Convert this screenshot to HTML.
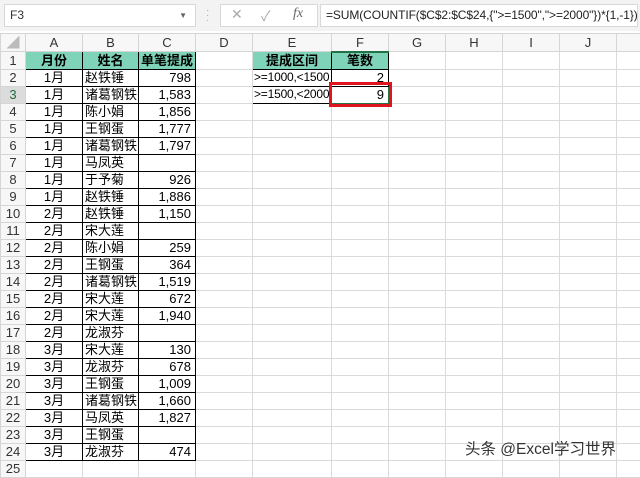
<!DOCTYPE html>
<html><head><meta charset="utf-8"><style>
body{margin:0;width:640px;height:469px;overflow:hidden;background:#fff;font-family:"Liberation Sans","Noto Sans CJK SC",sans-serif;position:relative}
.fb{position:absolute;top:0;left:0;width:640px;height:31px;background:#f3f3f3}
.nb{position:absolute;left:4px;top:4px;width:190px;height:21px;background:#fff;border:1px solid #d8d8d8;font-size:12px;line-height:21px;text-indent:5px;color:#333}
.ic{position:absolute;left:220px;top:4px;width:96px;height:21px;background:#fff;border:1px solid #d8d8d8;color:#aaa;font-size:14px}
.fx{position:absolute;left:320px;top:4px;width:316px;height:21px;background:#fff;border:1px solid #d8d8d8;font-size:12px;line-height:21px;text-indent:5px;color:#222;white-space:nowrap;overflow:hidden;letter-spacing:-0.1px}
table{position:absolute;top:33px;left:0;width:640px;border-collapse:collapse;table-layout:fixed}
td{border:1px solid #dadada;height:16px;padding:0;font-size:13px;line-height:15px;white-space:nowrap;overflow:hidden;color:#000;text-indent:2px}
tr{height:17px}
tr.h{height:18px}
tr.h td{background:#f7f7f7;text-align:center;color:#333;font-size:13px;border-color:#d5d5d5;text-indent:0}
td.r{background:#f7f7f7;text-align:center;color:#333;font-size:13px;text-indent:0;border-color:#d5d5d5}
td.s{background:#dcdcdc;color:#1e6b3e}
.g{background:#7ed3b8;font-weight:bold;text-align:center;border:1px solid #000!important;text-indent:0}
.b{border:1px solid #000!important}
.e{font-size:12px;text-indent:1px;letter-spacing:-0.2px}
.c{text-align:center;text-indent:0}.n{text-align:right;padding-right:4px}
.wm{position:absolute;left:465px;top:437px;font-size:15.5px;color:#333;white-space:nowrap}
.red{position:absolute;left:329px;top:82px;width:63px;height:25px;border:3px solid #e0141e;box-sizing:border-box}
</style></head><body>
<div class="fb"><div class="nb">F3<span style="position:absolute;right:8px;top:0;font-size:8px;color:#666">▼</span></div>
<div style="position:absolute;left:206px;top:8px;color:#aaa;font-size:10px;line-height:5px">·<br>·<br>·</div>
<div class="ic"><span style="position:absolute;left:10px;top:1px">✕</span><span style="position:absolute;left:40px;top:1px">✓</span><span style="position:absolute;left:72px;top:1px;font-family:'Liberation Serif';font-style:italic;color:#666">fx</span></div>
<div class="fx">=SUM(COUNTIF($C$2:$C$24,{"&gt;=1500","&gt;=2000"})*{1,-1})</div></div>
<table>
<colgroup><col style="width:25px"><col style="width:57px"><col style="width:56px"><col style="width:57px"><col style="width:57px"><col style="width:79px"><col style="width:57px"><col style="width:57px"><col style="width:57px"><col style="width:57px"><col style="width:57px"><col style="width:24px"></colgroup>
<tr class="h"><td style="color:#bbb">◢</td><td>A</td><td>B</td><td>C</td><td>D</td><td>E</td><td class="s" style="border-bottom:2px solid #217346">F</td><td>G</td><td>H</td><td>I</td><td>J</td><td></td></tr>
<tr><td class="r">1</td><td class="g">月份</td><td class="g">姓名</td><td class="g">单笔提成</td><td></td><td class="g">提成区间</td><td class="g">笔数</td><td></td><td></td><td></td><td></td><td></td></tr>
<tr><td class="r">2</td><td class="b c">1月</td><td class="b">赵铁锤</td><td class="b n">798</td><td></td><td class="b e">&gt;=1000,&lt;1500</td><td class="b n">2</td><td></td><td></td><td></td><td></td><td></td></tr>
<tr><td class="r s">3</td><td class="b c">1月</td><td class="b">诸葛钢铁</td><td class="b n">1,583</td><td></td><td class="b e">&gt;=1500,&lt;2000</td><td class="b n" style="border-color:#217346!important">9</td><td></td><td></td><td></td><td></td><td></td></tr>
<tr><td class="r">4</td><td class="b c">1月</td><td class="b">陈小娟</td><td class="b n">1,856</td><td></td><td></td><td></td><td></td><td></td><td></td><td></td><td></td></tr>
<tr><td class="r">5</td><td class="b c">1月</td><td class="b">王钢蛋</td><td class="b n">1,777</td><td></td><td></td><td></td><td></td><td></td><td></td><td></td><td></td></tr>
<tr><td class="r">6</td><td class="b c">1月</td><td class="b">诸葛钢铁</td><td class="b n">1,797</td><td></td><td></td><td></td><td></td><td></td><td></td><td></td><td></td></tr>
<tr><td class="r">7</td><td class="b c">1月</td><td class="b">马凤英</td><td class="b n"></td><td></td><td></td><td></td><td></td><td></td><td></td><td></td><td></td></tr>
<tr><td class="r">8</td><td class="b c">1月</td><td class="b">于予菊</td><td class="b n">926</td><td></td><td></td><td></td><td></td><td></td><td></td><td></td><td></td></tr>
<tr><td class="r">9</td><td class="b c">1月</td><td class="b">赵铁锤</td><td class="b n">1,886</td><td></td><td></td><td></td><td></td><td></td><td></td><td></td><td></td></tr>
<tr><td class="r">10</td><td class="b c">2月</td><td class="b">赵铁锤</td><td class="b n">1,150</td><td></td><td></td><td></td><td></td><td></td><td></td><td></td><td></td></tr>
<tr><td class="r">11</td><td class="b c">2月</td><td class="b">宋大莲</td><td class="b n"></td><td></td><td></td><td></td><td></td><td></td><td></td><td></td><td></td></tr>
<tr><td class="r">12</td><td class="b c">2月</td><td class="b">陈小娟</td><td class="b n">259</td><td></td><td></td><td></td><td></td><td></td><td></td><td></td><td></td></tr>
<tr><td class="r">13</td><td class="b c">2月</td><td class="b">王钢蛋</td><td class="b n">364</td><td></td><td></td><td></td><td></td><td></td><td></td><td></td><td></td></tr>
<tr><td class="r">14</td><td class="b c">2月</td><td class="b">诸葛钢铁</td><td class="b n">1,519</td><td></td><td></td><td></td><td></td><td></td><td></td><td></td><td></td></tr>
<tr><td class="r">15</td><td class="b c">2月</td><td class="b">宋大莲</td><td class="b n">672</td><td></td><td></td><td></td><td></td><td></td><td></td><td></td><td></td></tr>
<tr><td class="r">16</td><td class="b c">2月</td><td class="b">宋大莲</td><td class="b n">1,940</td><td></td><td></td><td></td><td></td><td></td><td></td><td></td><td></td></tr>
<tr><td class="r">17</td><td class="b c">2月</td><td class="b">龙淑芬</td><td class="b n"></td><td></td><td></td><td></td><td></td><td></td><td></td><td></td><td></td></tr>
<tr><td class="r">18</td><td class="b c">3月</td><td class="b">宋大莲</td><td class="b n">130</td><td></td><td></td><td></td><td></td><td></td><td></td><td></td><td></td></tr>
<tr><td class="r">19</td><td class="b c">3月</td><td class="b">龙淑芬</td><td class="b n">678</td><td></td><td></td><td></td><td></td><td></td><td></td><td></td><td></td></tr>
<tr><td class="r">20</td><td class="b c">3月</td><td class="b">王钢蛋</td><td class="b n">1,009</td><td></td><td></td><td></td><td></td><td></td><td></td><td></td><td></td></tr>
<tr><td class="r">21</td><td class="b c">3月</td><td class="b">诸葛钢铁</td><td class="b n">1,660</td><td></td><td></td><td></td><td></td><td></td><td></td><td></td><td></td></tr>
<tr><td class="r">22</td><td class="b c">3月</td><td class="b">马凤英</td><td class="b n">1,827</td><td></td><td></td><td></td><td></td><td></td><td></td><td></td><td></td></tr>
<tr><td class="r">23</td><td class="b c">3月</td><td class="b">王钢蛋</td><td class="b n"></td><td></td><td></td><td></td><td></td><td></td><td></td><td></td><td></td></tr>
<tr><td class="r">24</td><td class="b c">3月</td><td class="b">龙淑芬</td><td class="b n">474</td><td></td><td></td><td></td><td></td><td></td><td></td><td></td><td></td></tr>
<tr><td class="r">25</td><td></td><td></td><td></td><td></td><td></td><td></td><td></td><td></td><td></td><td></td><td></td></tr>
</table>
<div class="red"></div>
<div class="wm">头条 @Excel学习世界</div>
</body></html>
